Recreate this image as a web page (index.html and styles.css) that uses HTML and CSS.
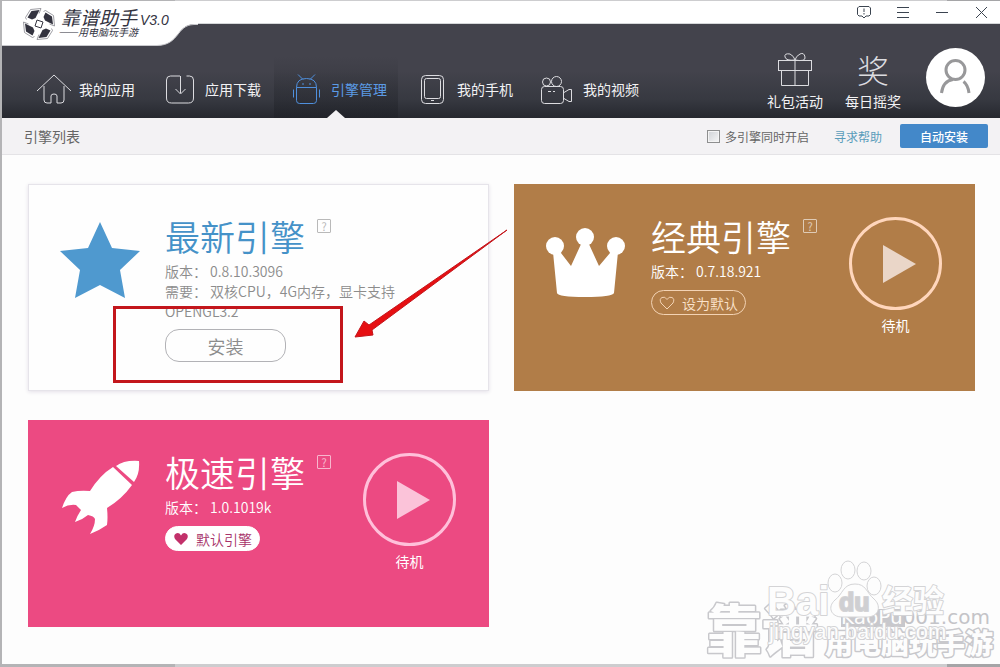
FILE: index.html
```html
<!DOCTYPE html>
<html lang="zh-CN">
<head>
  <meta charset="UTF-8">
  <meta name="viewport" content="width=device-width, initial-scale=1.0">
  <title>靠谱助手</title>
  <link rel="stylesheet" href="styles.css">
</head>
<body>

  <div class="window">
    <header class="header">
      <div class="titlebar">
        <button class="win-button" aria-label="反馈">
          <svg width="16" height="16" viewBox="0 0 16 16"><path d="M3 2.500h10l1.500 1.500v6.500l-1.500 1.500h-3l-2 2-2-2h-3l-1.500-1.500v-6.500z"/><path d="M8 4.500v3.500M8 9v1.500"/></svg>
        </button>
        <button class="win-button" aria-label="菜单">
          <svg width="16" height="16" viewBox="0 0 16 16"><path d="M2 3.500h12M2 8.500h12M2 13.500h12"/></svg>
        </button>
        <button class="win-button" aria-label="最小化">
          <svg width="16" height="16" viewBox="0 0 16 16"><path d="M2 8.500h12"/></svg>
        </button>
        <button class="win-button" aria-label="关闭">
          <svg width="16" height="16" viewBox="0 0 16 16"><path d="M3 3l11 11M14 3l-11 11"/></svg>
        </button>
      </div>

      <div class="brand">
        <svg class="brand-shape" width="196" height="46" viewBox="0 0 196 46"><path d="M0 0H196V23H192C174 24 178 44 155 44.500H0z" fill="#fff"/><path d="M196 23.500H192C174 24 178 44 155 44.500H0" fill="none" stroke="#c9c9cd"/></svg>
        <svg class="brand-logo" width="34" height="34" viewBox="0 0 34 34">
          <g fill="#33333f" stroke="#85858d">
            <g id="blade"><path d="M5.500 10.500L9.500 4 17.500 3 13.500 11 10 12.500z" stroke="none"/><path d="M4.500 12.500L3.500 10.500 8.500 2.500 19 1.500 17 6.500" fill="none" stroke-width=".8"/></g>
            <use href="#blade" transform="rotate(90 17 17)"/>
            <use href="#blade" transform="rotate(180 17 17)"/>
            <use href="#blade" transform="rotate(270 17 17)"/>
            <path d="M15 13l6 2-2 6-6-2z" fill="#fff" stroke="#33333f"/>
          </g>
        </svg>
        <div class="brand-text">
          <div class="brand-name">靠谱助手</div>
          <div class="brand-slogan">——用电脑玩手游</div>
        </div>
        <div class="brand-version">V3.0</div>
      </div>

      <div class="menu">
        <nav class="nav">
          <a class="nav-item" href="#">
            <svg width="36" height="32" viewBox="0 0 36 32"><path d="M1 18L18 2l17 16M8 13v14q0 3 3 3h4v-7q0-2 3-2t3 2v7h4q3 0 3-3v-14"/></svg>
            <span>我的应用</span>
          </a>
          <a class="nav-item" href="#">
            <svg width="36" height="32" viewBox="0 0 36 32"><path d="M14 3H8.500q-4 0-4 4v18q0 5 5 5h17q5 0 5-5V7q0-4-4-4h-3M18.500 3v17M13.500 16l5 5 5-5M14 3h4"/></svg>
            <span>应用下载</span>
          </a>
          <a class="nav-item active" href="#">
            <svg width="36" height="32" viewBox="0 0 36 32"><path d="M8.500 14.500q0-9 10-9t10 9zM8.500 14.500v13q0 3 3 3h14q3 0 3-3v-13M15 6.500l-5-5M22 6.500l5-5M5.500 16.500v8M31.500 16.500v8M15 10v2M22 10v2"/></svg>
            <span>引擎管理</span>
          </a>
          <a class="nav-item" href="#">
            <svg width="36" height="32" viewBox="0 0 36 32"><rect x="7.500" y="2.500" width="22" height="28" rx="4"/><rect x="10.500" y="5.500" width="16" height="20" rx="2"/><path d="M17 27.500h3"/></svg>
            <span>我的手机</span>
          </a>
          <a class="nav-item" href="#">
            <svg width="36" height="32" viewBox="0 0 36 32"><rect x="1.500" y="13.500" width="22" height="17" rx="3"/><circle cx="6.500" cy="9" r="4"/><circle cx="16.500" cy="8.500" r="5"/><path d="M24 19.500l5-3h2.500v12h-2.500l-5-3M8 18.500h3M13 18.500h2"/></svg>
            <span>我的视频</span>
          </a>
        </nav>

        <div class="user-area">
          <a class="promo" href="#">
            <svg width="36" height="36" viewBox="0 0 36 36"><rect x="1.500" y="9.500" width="33" height="10"/><path d="M4.500 20v14.500h27V20M18 10v25M18 9Q9 10 8 6T13 3Q17 5 18 9Q19 5 23 3T28 6T18 9"/></svg>
            <span>礼包活动</span>
          </a>
          <a class="promo" href="#">
            <span class="promo-glyph">奖</span>
            <span>每日摇奖</span>
          </a>
          <a class="avatar" href="#" aria-label="用户">
            <svg width="59" height="59" viewBox="0 0 59 59"><circle cx="29.500" cy="22" r="9.500"/><path d="M15.500 45Q17 33 27 31.500M37.500 33.500Q42 37 43 45"/></svg>
          </a>
        </div>
      </div>
    </header>

    <div class="toolbar">
      <h1 class="toolbar-title">引擎列表</h1>
      <label class="multi"><input type="checkbox">多引擎同时开启</label>
      <a class="help-link" href="#">寻求帮助</a>
      <button class="auto-install">自动安装</button>
    </div>

    <main class="engines">
      <section class="engine latest">
        <svg class="engine-icon" width="80" height="80" viewBox="0 0 80 80"><path d="M40 0L52 26 80 29 60 48 65 76 40 63 15 76 20 48 0 29 28 26z"/></svg>
        <div class="engine-info">
          <div class="engine-head"><h2>最新引擎</h2><button class="hint" aria-label="说明">?</button></div>
          <p>版本： 0.8.10.3096</p>
          <p>需要： 双核CPU，4G内存，显卡支持OPENGL3.2</p>
          <button class="install">安装</button>
        </div>
        <svg class="callout" width="396" height="162" viewBox="0 0 396 162">
          <rect x="1.500" y="80.500" width="227" height="74" fill="none" stroke="#c3161c" stroke-width="3"/>
          <path d="M242 110L251 94 256 98 394 3 259 103 260 108z" fill="#e60f12" stroke="#c3161c"/>
        </svg>
      </section>

      <section class="engine classic">
        <svg class="engine-icon" width="80" height="80" viewBox="0 -8 80 80"><circle cx="9" cy="16" r="9"/><circle cx="39" cy="7" r="9"/><circle cx="70" cy="16" r="9"/><path d="M7 22L15 23 25 36 36 12H42L53 36 64 23 72 22 68 63Q66 67 39 67T11 63z"/></svg>
        <div class="engine-info">
          <div class="engine-head"><h2>经典引擎</h2><button class="hint" aria-label="说明">?</button></div>
          <p>版本： 0.7.18.921</p>
          <button class="default-pill"><svg width="16" height="14" viewBox="0 0 16 14"><path d="M8 13L2 7Q0 3 3 1.500T8 3.500Q10 0 13 1.500T14 7z"/></svg>设为默认</button>
        </div>
        <div class="launch">
          <button class="play" aria-label="启动"><svg width="34" height="40" viewBox="0 0 34 40"><path d="M0 1L33 20 0 39z"/></svg></button>
          <span>待机</span>
        </div>
      </section>

      <section class="engine speed">
        <svg class="engine-icon" width="80" height="80" viewBox="0 0 80 80"><path d="M79 3Q64 2 56 8L74 24Q80 16 79 3zM53 9Q40 17 30 33 20 32 12 34 6 38 2 50 9 46 16 47L21 52Q17 58 15 64 22 62 28 57 34 58 35 61 35 68 30 76 40 72 47 67 48 60 47 50 62 41 72 27z"/></svg>
        <div class="engine-info">
          <div class="engine-head"><h2>极速引擎</h2><button class="hint" aria-label="说明">?</button></div>
          <p>版本： 1.0.1019k</p>
          <button class="default-pill is-default"><svg width="16" height="14" viewBox="0 0 16 14"><path d="M8 13L2 7Q0 3 3 1.500T8 3.500Q10 0 13 1.500T14 7z"/></svg>默认引擎</button>
        </div>
        <div class="launch">
          <button class="play" aria-label="启动"><svg width="34" height="40" viewBox="0 0 34 40"><path d="M0 1L33 20 0 39z"/></svg></button>
          <span>待机</span>
        </div>
      </section>
    </main>

    <svg class="watermark" width="300" height="110" viewBox="0 0 300 110">
      <g class="mark-kaopu">
        <text class="mark-big" x="6" y="97">靠谱</text>
        <path class="mark-block" d="M141 55H205V73H141z"/>
        <text class="mark-site" x="141" y="70"><tspan class="mark-light">KaoPu</tspan>001.com</text>
        <text class="mark-slogan" x="125" y="100">用电脑玩手游</text>
      </g>
      <g class="mark-baidu">
        <ellipse cx="135" cy="29" rx="7" ry="9"/>
        <ellipse cx="148" cy="16" rx="7" ry="9"/>
        <ellipse cx="164" cy="17" rx="7" ry="9"/>
        <ellipse cx="174" cy="32" rx="7" ry="9"/>
        <path d="M155 30C143 30 143 40 135 46 127 53 131 63 142 63H168C180 62 181 51 174 45 166 38 166 30 155 30z"/>
        <text class="mark-bai" x="67" y="61">Bai</text>
        <text class="mark-du" x="139" y="57">du</text>
        <text class="mark-jy" x="182" y="58">经验</text>
        <text class="mark-url" x="69" y="85">jingyan.baidu.com</text>
      </g>
    </svg>
  </div>

</body>
</html>
```
FILE: styles.css
```css
* {
  box-sizing: border-box;
}
body {
  margin: 0;
  min-height: 100vh;
  display: flex;
  padding: 1px 0 3px 2px;
  background: linear-gradient(to right, #b4b4b6 175px, #cdcdcf 175px, #cdcdcf 947px, #a5a5a7 947px);
  color: #666;
  font-family: "Noto Sans CJK SC", sans-serif;
  font-size: 14px;
}
a {
  color: inherit;
  text-decoration: none;
}
button {
  font-family: inherit;
  padding: 0;
  border: 0;
  background: none;
  color: inherit;
  cursor: pointer;
}
svg {
  display: block;
}
.window {
  flex: 1;
  position: relative;
  background: #fdfdfd;
}

/* header */
.header {
  position: relative;
}
.titlebar {
  height: 23px;
  display: flex;
  justify-content: flex-end;
  align-items: center;
  gap: 23px;
  padding-right: 11px;
  background: #fff;
  border-bottom: 1px solid #d5d7d9;
}
.win-button svg {
  fill: none;
  stroke: #3b4450;
  stroke-width: 1;
}
.brand {
  position: absolute;
  top: 0;
  left: 0;
  width: 196px;
  height: 46px;
  display: flex;
  gap: 2px;
  padding: 6px 0 0 20px;
  color: #33333f;
}
.brand-shape {
  position: absolute;
  top: 0;
  left: 0;
}
.brand-logo,
.brand-text,
.brand-version {
  position: relative;
}
.brand-name {
  padding-left: 3px;
  font-size: 19px;
  line-height: 20px;
  font-style: italic;
}
.brand-slogan {
  font-size: 10px;
  line-height: 10px;
  font-style: italic;
  white-space: nowrap;
}
.brand-version {
  font-family: "Liberation Sans", Arial, sans-serif;
  font-size: 14px;
  line-height: 26px;
  font-style: italic;
}
.menu {
  height: 94px;
  display: flex;
  justify-content: space-between;
  padding: 0 15px 0 20px;
  background: linear-gradient(#43434c, #43434c 50%, #373941 80%, #26282f);
  color: #f2f2f4;
}
.nav {
  display: flex;
  align-items: flex-end;
  gap: 2px;
}
.nav-item {
  position: relative;
  width: 124px;
  height: 62px;
  display: flex;
  align-items: center;
  gap: 7px;
  padding: 4px 0 0 14px;
  white-space: nowrap;
}
.nav-item svg,
.promo svg {
  fill: none;
  stroke: #dcdce0;
  stroke-width: 1;
}
.nav-item.active {
  color: #5b9be6;
  background: linear-gradient(rgba(30, 32, 38, 0), rgba(30, 32, 38, 0.5));
}
.nav-item.active svg {
  stroke: #4f8fdc;
}
.nav-item.active::after {
  content: "";
  position: absolute;
  left: 53px;
  bottom: 0;
  border: 9px solid transparent;
  border-top: 0;
  border-bottom: 8px solid #f3f2f4;
}
.user-area {
  display: flex;
  gap: 22px;
  align-items: center;
}
.promo {
  display: flex;
  flex-direction: column;
  align-items: center;
  line-height: 20px;
  padding-top: 20px;
}
.promo svg,
.promo-glyph {
  height: 36px;
  margin-bottom: 4px;
}
.promo-glyph {
  font-size: 32px;
  line-height: 36px;
  font-weight: 300;
  color: #dcdce0;
}
.avatar {
  margin-left: 3px;
  margin-top: 12px;
  border-radius: 50%;
  background: #fff;
}
.avatar svg {
  fill: none;
  stroke: #98989a;
  stroke-width: 3;
}

/* toolbar */
.toolbar {
  height: 37px;
  display: flex;
  align-items: center;
  padding: 0 12px 0 22px;
  background: #f3f2f4;
  border-bottom: 1px solid #e4e3e6;
  font-size: 12px;
}
.toolbar-title {
  margin: 0 auto 0 0;
  font-size: 14px;
  font-weight: 400;
}
.multi {
  display: flex;
  align-items: center;
  gap: 5px;
}
.multi input {
  appearance: none;
  width: 13px;
  height: 13px;
  margin: 0;
  border: 1px solid #8e8f8f;
  background: linear-gradient(135deg, #cfd2d6, #f6f6f6);
  box-shadow: inset 0 0 0 1px #f4f4f4;
}
.help-link {
  margin: 0 18px 0 25px;
  color: #5a9dbb;
}
.auto-install {
  width: 88px;
  height: 24px;
  border-radius: 2px;
  background: #4388c9;
  color: #fff;
  font-size: 12px;
  font-weight: 500;
}

/* engine cards */
.engines {
  display: grid;
  grid-template-columns: 1fr 1fr;
  gap: 29px 25px;
  padding: 29px 25px 37px 26px;
}
.engine {
  position: relative;
  height: 207px;
  display: flex;
  padding: 33px 33px 0 32px;
  color: #fff;
}
.engine-icon {
  margin-top: 5px;
  margin-right: 25px;
  flex: none;
  fill: #fff;
}
.engine-info {
  flex: 1;
}
.engine-head {
  display: flex;
  gap: 12px;
  margin-bottom: 6px;
}
.engine h2 {
  margin: 0;
  font-size: 35px;
  line-height: 38px;
  font-weight: 350;
  white-space: nowrap;
}
.hint {
  width: 14px;
  height: 14px;
  margin-top: 2px;
  border: 1px solid;
  border-radius: 1px;
  font-size: 11px;
  line-height: 12px;
  opacity: 0.6;
}
.engine p {
  margin: 0;
  max-width: 240px;
  line-height: 20px;
  font-weight: 350;
}
.latest {
  background: #fefefe;
  border: 1px solid #e6e4ea;
  box-shadow: 0 1px 4px #e4e0e8;
  padding: 32px 32px 0 31px;
  color: #8c8c8c;
}
.latest .engine-icon {
  fill: #4f99cf;
}
.latest h2 {
  color: #4592c8;
}
.classic {
  background: #b17d48;
}
.speed {
  background: #ec4a82;
}
.install {
  width: 121px;
  height: 33px;
  margin-top: 8px;
  border: 1px solid #b2b2b6;
  border-radius: 14px;
  font-size: 18px;
  line-height: 28px;
  font-weight: 350;
}
.default-pill {
  width: 95px;
  height: 25px;
  margin-top: 9px;
  display: flex;
  align-items: center;
  justify-content: center;
  gap: 7px;
  border: 1px solid #f3d3b4;
  border-radius: 13px;
  color: #fbe3cc;
  font-size: 14px;
  line-height: 20px;
  font-weight: 350;
  white-space: nowrap;
}
.default-pill svg {
  fill: none;
  stroke: #f3d3b4;
}
.is-default {
  border-color: #fff;
  background: #fff;
  color: #a8336a;
}
.is-default svg {
  fill: #c2306a;
  stroke: none;
}
.launch {
  display: flex;
  flex-direction: column;
  align-items: center;
  gap: 5px;
  line-height: 20px;
}
.play {
  width: 93px;
  height: 93px;
  display: flex;
  align-items: center;
  justify-content: center;
  padding-left: 9px;
  border: 3px solid #ffd6bc;
  border-radius: 50%;
}
.play svg {
  fill: #ead6c8;
}
.speed .play {
  border-color: #ffc0da;
}
.speed .play svg {
  fill: #fbc3d9;
}
.callout {
  position: absolute;
  left: 84px;
  top: 42px;
  z-index: 2;
  pointer-events: none;
}

/* watermark over the bottom right corner */
.watermark {
  position: absolute;
  right: 0;
  bottom: 0;
  pointer-events: none;
}
.watermark text {
  paint-order: stroke;
  stroke-linejoin: round;
}
.mark-kaopu {
  fill: #fdfdfd;
  stroke: #c8c8cc;
  stroke-width: 3;
  font-weight: 900;
}
.mark-big {
  font-size: 56px;
}
.mark-block {
  fill: #c8c8cc;
  stroke: none;
}
.watermark .mark-site {
  font-family: "DejaVu Sans", sans-serif;
  font-size: 20px;
  font-weight: 400;
  fill: #c4c4c8;
  stroke: none;
}
.mark-light {
  fill: #fdfdfd;
}
.mark-slogan {
  font-size: 28px;
}
.mark-baidu {
  fill: #fdfdfd;
  stroke: #d4d4d6;
  stroke-width: 1;
}
.mark-baidu text {
  stroke-width: 2;
}
.mark-bai,
.mark-du {
  font-family: "Liberation Sans", Arial, sans-serif;
  font-weight: 700;
}
.mark-bai {
  font-size: 40px;
}
.mark-du {
  fill: #cfcfd2;
  font-size: 25px;
}
.mark-jy {
  font-size: 31px;
  font-weight: 700;
}
.mark-url {
  font-family: "Liberation Sans", Arial, sans-serif;
  font-size: 22px;
}
```
